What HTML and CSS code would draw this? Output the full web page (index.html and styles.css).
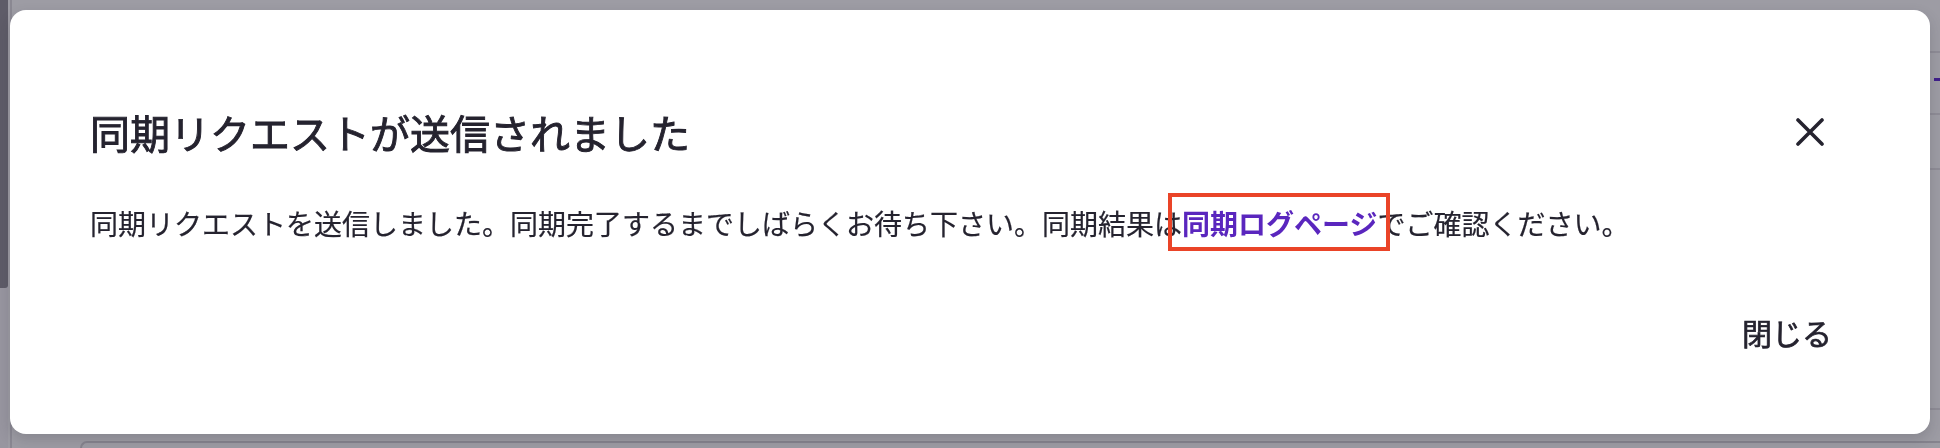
FILE: index.html
```html
<!DOCTYPE html>
<html lang="ja">
<head>
<meta charset="utf-8">
<title>同期リクエスト</title>
<link rel="stylesheet" href="styles.css">
</head>
<body>
<div class="page">
  <div class="sidebar"><div class="sidebar-thumb"></div></div>
  <div class="page-rule"></div>
  <div class="page-main">
    <div class="row row-a"></div>
    <div class="row row-b"><span class="row-mark"></span></div>
    <div class="row row-c"></div>
    <div class="row row-d"></div>
    <div class="page-card"></div>
  </div>
</div>

<div class="dialog" role="dialog" aria-labelledby="dlg-title">
  <div class="dialog-header">
    <h2 id="dlg-title" class="dialog-title">同期リクエストが送信されました</h2>
    <button class="icon-btn" aria-label="閉じる">
      <svg viewBox="0 0 28 28" width="28" height="28"><path d="M2 2 L26 26 M26 2 L2 26" stroke="#25232f" stroke-width="3.6" stroke-linecap="round" fill="none"/></svg>
    </button>
  </div>
  <p class="dialog-body">同期リクエストを送信しました。同期完了するまでしばらくお待ち下さい。同期結果は<a class="link" href="#">同期ログページ</a>でご確認ください。</p>
  <div class="dialog-footer">
    <button class="text-btn">閉じる</button>
  </div>
</div>
</body>
</html>
```

FILE: styles.css
```css
html, body {
  margin: 0;
  padding: 0;
}
body {
  width: 1940px;
  height: 448px;
  overflow: hidden;
  background: #9d9ca4;
  font-family: "Noto Sans CJK JP", "Noto Sans", sans-serif;
  color: #25232f;
}

/* page behind overlay */
.page {
  display: flex;
  height: 448px;
}
.sidebar {
  width: 8px;
  background: #9896a0;
}
.sidebar-thumb {
  height: 288px;
  background: #5e5c68;
  border-bottom-right-radius: 3px;
}
.page-rule {
  width: 2px;
  margin-left: 2px;
  background: #8a8892;
}
.page-main {
  flex: 1;
  display: flex;
  flex-direction: column;
}
.row {
  border-bottom: 2px solid #8e8c96;
}
.row-a { height: 51px; }
.row-b { height: 60px; position: relative; }
.row-c { height: 53px; }
.row-d { height: 238px; }
.row-mark {
  position: absolute;
  right: 0;
  top: 25px;
  width: 6px;
  height: 3px;
  background: #3f1f8a;
}
.page-card {
  margin-left: 68px;
  margin-top: 31px;
  flex: 1;
  border-top: 2px solid #86848e;
  border-left: 2px solid #86848e;
  border-top-left-radius: 14px;
}

/* dialog */
.dialog {
  position: fixed;
  left: 10px;
  top: 10px;
  width: 1920px;
  height: 424px;
  box-sizing: border-box;
  padding: 98px 98px 0 80px;
  background: #ffffff;
  border-radius: 16px;
  box-shadow: 0 6px 14px rgba(40, 38, 50, 0.18);
}
.dialog-header {
  display: flex;
  align-items: center;
  justify-content: space-between;
}
.dialog-title {
  margin: 0;
  font-size: 40px;
  line-height: 48px;
  font-weight: 400;
  -webkit-text-stroke: 0.9px #25232f;
  color: #25232f;
}
.icon-btn {
  width: 44px;
  height: 44px;
  padding: 0;
  border: 0;
  background: transparent;
  display: flex;
  align-items: center;
  justify-content: center;
}
.dialog-body {
  margin: 46px 0 0;
  font-size: 28px;
  line-height: 42px;
  font-weight: 400;
  -webkit-text-stroke: 0.2px #25232f;
  color: #25232f;
  white-space: nowrap;
}
.link {
  display: inline-block;
  position: relative;
  color: #5a26be;
  font-weight: 600;
  -webkit-text-stroke: 0;
  text-decoration: none;
}
.link::after {
  content: "";
  position: absolute;
  left: -14px;
  right: -13px;
  top: -9px;
  bottom: -7px;
  border: 4.5px solid #ea4428;
}
.dialog-footer {
  display: flex;
  justify-content: flex-end;
  margin-top: 66px;
}
.text-btn {
  padding: 0;
  border: 0;
  background: transparent;
  font-family: inherit;
  font-size: 30px;
  line-height: 44px;
  font-weight: 400;
  -webkit-text-stroke: 0.7px #25232f;
  color: #25232f;
}
```
